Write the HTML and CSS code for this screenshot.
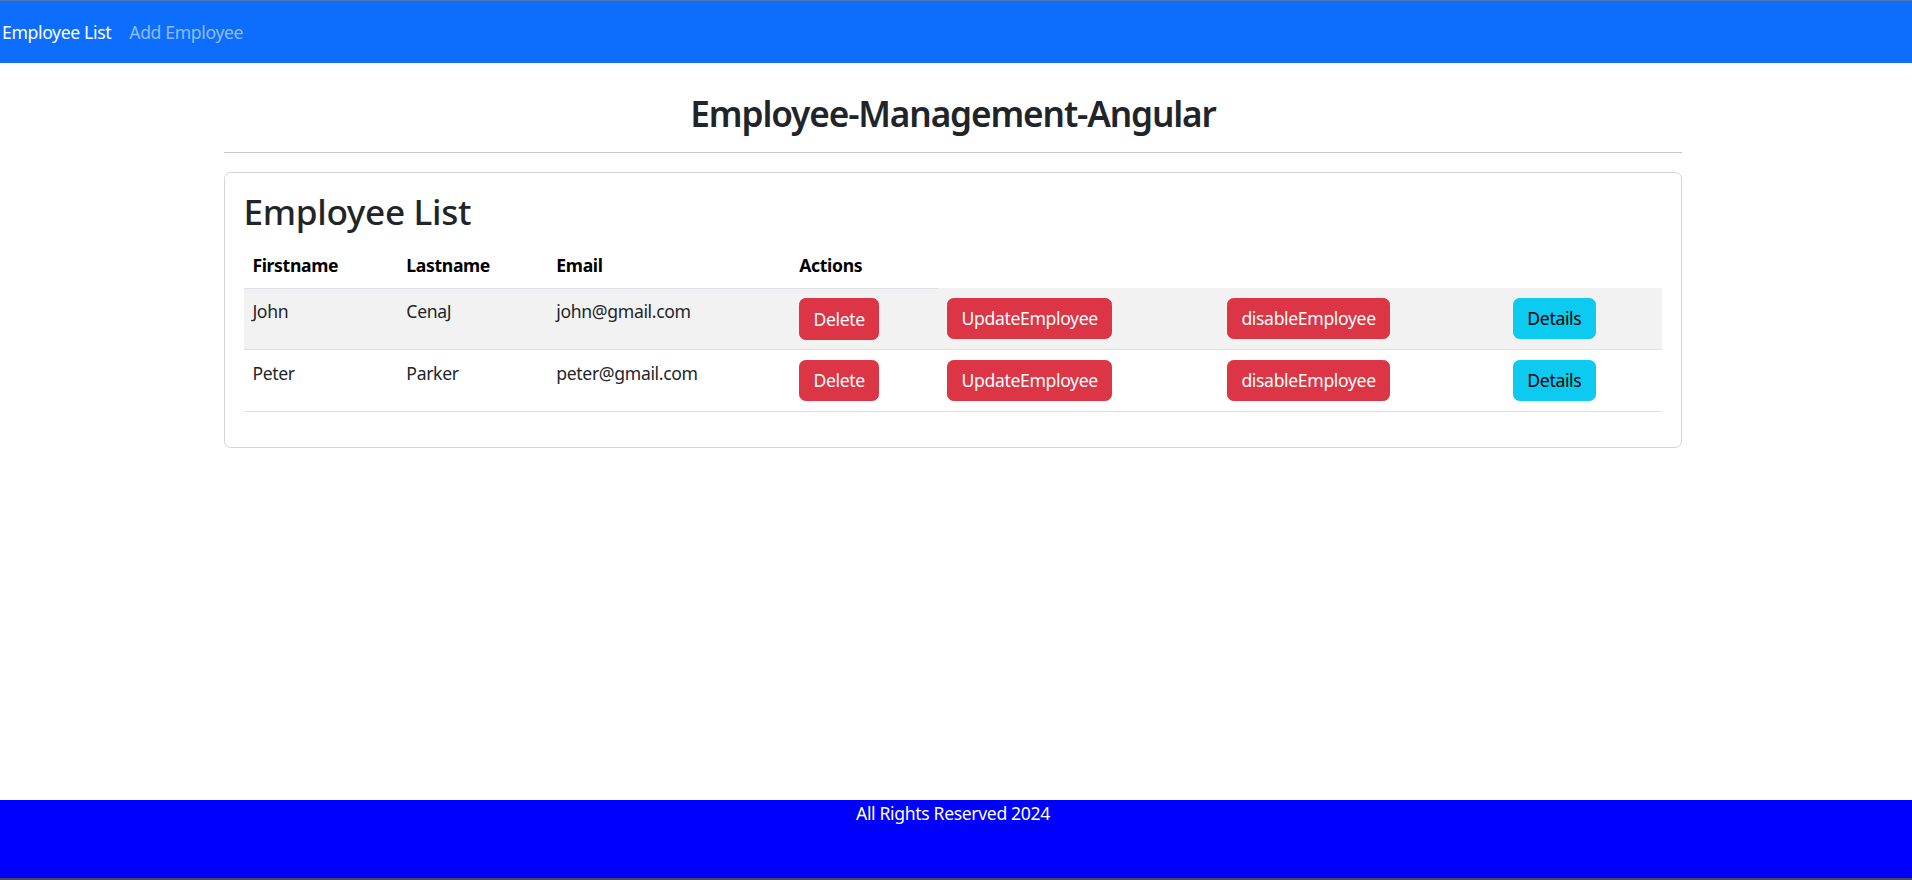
FILE: index.html
```html
<!DOCTYPE html>
<html lang="en">
<head>
<meta charset="utf-8">
<title>Employee-Management-Angular</title>
<link rel="stylesheet" href="styles.css">
</head>
<body>
<nav class="navbar">
  <a class="nav-link active" href="#">Employee List</a>
  <a class="nav-link" href="#">Add Employee</a>
</nav>
<main class="main">
  <div class="container">
    <h2 class="title">Employee-Management-Angular</h2>
    <hr class="divider">
    <div class="card">
      <h2 class="card-title">Employee List</h2>
      <table class="table">
        <colgroup>
          <col class="c1"><col class="c2"><col class="c3"><col class="c4"><col class="c5"><col class="c6"><col class="c7">
        </colgroup>
        <thead>
          <tr>
            <th>Firstname</th>
            <th>Lastname</th>
            <th>Email</th>
            <th>Actions</th>
          </tr>
        </thead>
        <tbody>
          <tr class="striped">
            <td>John</td>
            <td>CenaJ</td>
            <td>john@gmail.com</td>
            <td><button class="btn btn-danger">Delete</button></td>
            <td><button class="btn btn-danger">UpdateEmployee</button></td>
            <td><button class="btn btn-danger">disableEmployee</button></td>
            <td><button class="btn btn-info">Details</button></td>
          </tr>
          <tr>
            <td>Peter</td>
            <td>Parker</td>
            <td>peter@gmail.com</td>
            <td><button class="btn btn-danger">Delete</button></td>
            <td><button class="btn btn-danger">UpdateEmployee</button></td>
            <td><button class="btn btn-danger">disableEmployee</button></td>
            <td><button class="btn btn-info">Details</button></td>
          </tr>
        </tbody>
      </table>
    </div>
  </div>
</main>
<footer class="footer">All Rights Reserved 2024</footer>
</body>
</html>
```

FILE: styles.css
```css
* { box-sizing: border-box; }

html, body {
  margin: 0;
  padding: 0;
}

body {
  height: 880px;
  display: flex;
  flex-direction: column;
  font-family: "Noto Sans", "Open Sans", sans-serif;
  font-size: 17.6px;
  line-height: 26.4px;
  letter-spacing: -0.02em;
  color: #212529;
  background: #fff;
}

.navbar {
  height: 63px;
  flex: 0 0 auto;
  display: flex;
  align-items: center;
  gap: 18px;
  padding: 0 0 0 2px;
  background: #0d6efd;
  border-top: 1px solid #4f74b4;
}

.nav-link {
  color: rgba(255, 255, 255, 0.55);
  text-decoration: none;
}

.nav-link.active {
  color: #fff;
}

.main {
  flex: 1 1 auto;
  padding-right: 6px;
}

.container {
  width: 1458px;
  margin: 0 auto;
}

.title {
  margin: 29px 0 0;
  font-size: 35.2px;
  line-height: 42.24px;
  font-weight: 600;
  letter-spacing: -0.032em;
  text-align: center;
  color: #212529;
}

.divider {
  margin: 17.6px 0 19px;
  border: 0;
  border-top: 1px solid #c8c9ca;
  height: 0;
}

.card {
  border: 1px solid #d3d4d5;
  border-radius: 6.6px;
  padding: 17.6px 18.6px 17.6px 18.6px;
}

.card-title {
  margin: 0 0 11px;
  font-size: 35.2px;
  line-height: 42.24px;
  font-weight: 500;
  color: #212529;
}

.table {
  width: 100%;
  border-collapse: collapse;
  margin-bottom: 17.6px;
}

.c1 { width: 154px; }
.c2 { width: 150px; }
.c3 { width: 243px; }
.c4 { width: 148px; }
.c5 { width: 280px; }
.c6 { width: 286px; }
.c7 { width: 158px; }

.table th {
  text-align: left;
  font-weight: 700;
  color: #000;
  padding: 8.8px;
  border-bottom: 1px solid #dee2e6;
  vertical-align: top;
}

.table td {
  padding: 9.4px 8.8px 9.8px;
  border-bottom: 1px solid #dee2e6;
  vertical-align: top;
  color: #212529;
}

.table tr.striped td {
  background: #f2f2f2;
}

.btn {
  font-family: inherit;
  font-size: 17.6px;
  line-height: 26.4px;
  letter-spacing: inherit;
  padding: 6.6px 13.2px;
  border: 1px solid transparent;
  border-radius: 6.6px;
  cursor: pointer;
  display: inline-block;
}

.btn-danger {
  background: #dc3545;
  border-color: #dc3545;
  color: #fff;
}

.btn-info {
  background: #0dcaf0;
  border-color: #0dcaf0;
  color: #000;
}

.footer {
  flex: 0 0 80px;
  background: #0000ff;
  color: #fff;
  text-align: center;
  padding-right: 6px;
  border-bottom: 2px solid #4a4a58;
}
```
